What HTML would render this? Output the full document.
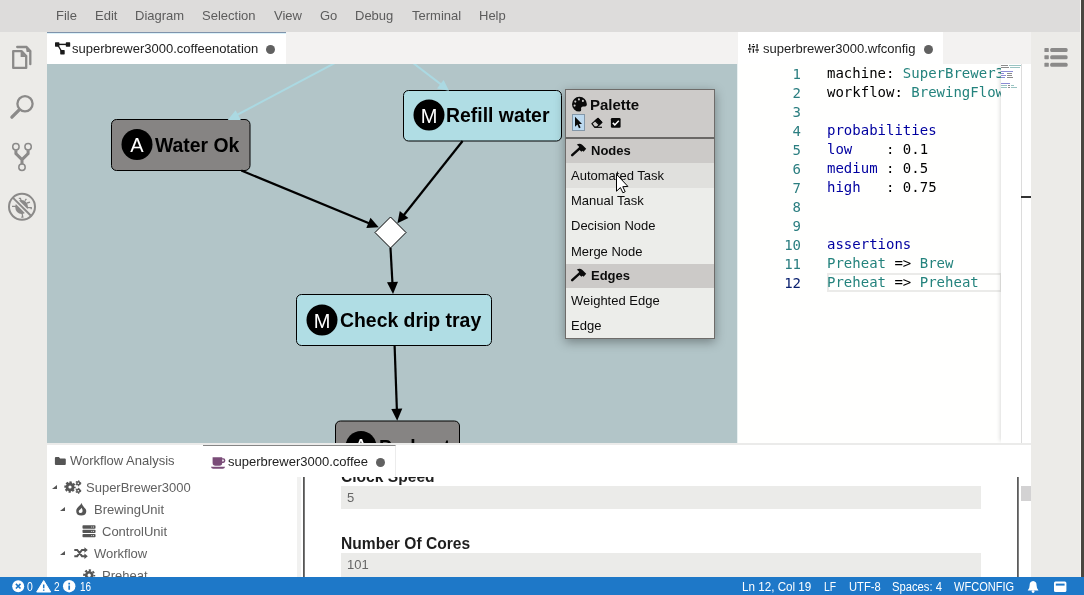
<!DOCTYPE html>
<html><head><meta charset="utf-8">
<style>
*{box-sizing:border-box;margin:0;padding:0}
body{will-change:transform}html,body{width:1084px;height:595px;overflow:hidden;background:#ecebe8;font-family:"Liberation Sans",sans-serif;}
#menubar{position:absolute;left:0;top:0;width:1084px;height:32px;background:#dddcdb;}
#menubar span{position:absolute;top:8px;font-size:13px;color:#5c5c5c;line-height:15px}
#lside{position:absolute;left:0;top:32px;width:47px;height:545px;background:#ecebe8}
#rside{position:absolute;left:1031px;top:32px;width:53px;height:545px;background:#ecebe8}
#tabbarL{position:absolute;left:47px;top:32px;width:691px;height:32px;background:#f3f2f1}
#tabbarR{position:absolute;left:738px;top:32px;width:293px;height:32px;background:#f3f2f1}
.tab{position:absolute;top:0;height:32px;background:#fff;font-size:13px;color:#222;line-height:32px;white-space:nowrap}
.dot{position:absolute;width:9px;height:9px;border-radius:50%;background:#616161}
#diagram{position:absolute;left:47px;top:64px;width:690px;height:379px;background:#b2c5c8;overflow:hidden}
#code{position:absolute;left:738px;top:64px;width:293px;height:379px;background:#fffffe;overflow:hidden}
#bottom{position:absolute;left:47px;top:443px;width:984px;height:134px;background:#fff;overflow:hidden}
#status{position:absolute;left:0;top:577px;width:1084px;height:18px;background:#1e78c8;color:#fff;font-size:12.5px;line-height:18px}
#status span{position:absolute;top:.5px;white-space:nowrap;transform-origin:0 0}

#palette{position:absolute;left:565px;top:89px;width:150px;height:250px;box-shadow:0 3px 10px rgba(0,0,0,.35);font-size:13px;color:#0c0c0c}
#phead{position:absolute;z-index:1;left:0;top:0;width:150px;height:50px;background:#cdcbc9;border:1px solid #6e6c6a;border-bottom:2px solid #6a6866}
#pbody{position:absolute;left:0;top:49px;width:150px;height:201px;background:#ecedea;border:1px solid #6e6c6a;border-top:none}
.prow{position:absolute;left:0;width:148px;height:25px;line-height:25px;padding-left:5px;white-space:nowrap}
.phd{background:#cccac8;font-weight:bold;font-size:13px;padding-left:25px}

#code{font-family:"DejaVu Sans Mono","Liberation Mono",monospace;font-size:14px;line-height:19px}
.ln{position:absolute;margin-top:1px;left:0;width:63px;text-align:right;color:#2b7e80;height:19px}
.cl{position:absolute;left:89px;height:19px;white-space:pre;color:#000}
.t{color:#24837d}.k{color:#0000a0}

#bottom{font-size:13px;color:#616161}
.trow{position:absolute;height:22px;line-height:22px;white-space:nowrap}
.tri{position:absolute;width:0;height:0;border-left:5px solid transparent;border-bottom:4.3px solid #555;margin-left:-.6px}
.flabel{position:absolute;left:294px;font-size:15.6px;font-weight:bold;color:#1e1e1e;line-height:17px;white-space:nowrap}
.finput{position:absolute;left:294px;width:640px;height:22px;background:#ebebe9;line-height:24px;padding-left:6px;color:#666;font-size:13px}
</style></head><body>
<div id="menubar">
<span style="left:56px">File</span><span style="left:95px">Edit</span><span style="left:135px">Diagram</span><span style="left:202px">Selection</span><span style="left:274px">View</span><span style="left:320px">Go</span><span style="left:355px">Debug</span><span style="left:412px">Terminal</span><span style="left:479px">Help</span>
</div>
<div id="lside"></div>
<div id="rside"></div>
<div id="tabbarL"><div class="tab" style="left:0;width:239px;border-top:1px solid #7f93ab;box-shadow:inset 0 1px 0 #dcf2fa;padding-left:25px;line-height:32px">superbrewer3000.coffeenotation<div class="dot" style="left:219px;top:12px"></div></div></div>
<div id="tabbarR"><div class="tab" style="left:0;width:205px;padding-left:25px;line-height:34px">superbrewer3000.wfconfig<div class="dot" style="left:186px;top:13px"></div></div></div>
<div id="diagram">
<svg width="691" height="379" viewBox="47 64 691 379" style="position:absolute;left:0;top:0" font-family="Liberation Sans, sans-serif">
<!-- nodes -->
<rect x="111.5" y="119.5" width="138.5" height="51" rx="5" ry="5" fill="#868483" stroke="#000" stroke-width="1"/>
<circle cx="137" cy="144.5" r="15.5" fill="#000"/>
<text x="137" y="152" font-size="20" fill="#fff" text-anchor="middle">A</text>
<text x="155" y="151.8" font-size="19.4" font-weight="bold" fill="#000">Water Ok</text>

<rect x="403.5" y="90.5" width="158" height="50.5" rx="5" ry="5" fill="#b0dde4" stroke="#000" stroke-width="1"/>
<circle cx="429" cy="115" r="15.5" fill="#000"/>
<text x="429" y="122.5" font-size="20" fill="#fff" text-anchor="middle">M</text>
<text x="446" y="121.8" font-size="19.4" font-weight="bold" fill="#000">Refill water</text>

<rect x="296.5" y="294.5" width="195" height="51" rx="5" ry="5" fill="#b0dde4" stroke="#000" stroke-width="1"/>
<circle cx="322" cy="320" r="15.5" fill="#000"/>
<text x="322" y="327.5" font-size="20" fill="#fff" text-anchor="middle">M</text>
<text x="340" y="326.8" font-size="19.4" font-weight="bold" fill="#000">Check drip tray</text>

<rect x="335.5" y="421" width="124" height="51" rx="5" ry="5" fill="#868483" stroke="#000" stroke-width="1"/>
<circle cx="361" cy="446.5" r="15.5" fill="#000"/>
<text x="361" y="453.4" font-size="20" fill="#fff" text-anchor="middle">A</text>
<text x="379" y="454.4" font-size="19.4" font-weight="bold" fill="#000">Preheat</text>

<polygon points="390.5,217 406,232.5 390.5,248 375,232.5" fill="#fff" stroke="#000" stroke-width="1"/>
<!-- light edges -->
<g stroke="#abd9e2" stroke-width="2" fill="#abd9e2">
<line x1="340.6" y1="60" x2="233" y2="117"/>
<polygon points="227.7,120 235.6,110.3 240.8,120" stroke="none"/>
<line x1="409.7" y1="60.4" x2="443.6" y2="86.4"/>
<polygon points="449,90.8 437,88.6 443.6,80" stroke="none"/>
</g>
<!-- dark edges -->
<g stroke="#000" stroke-width="2.2" fill="#000">
<line x1="241.3" y1="170.5" x2="372" y2="224.6"/>
<polygon points="378.7,227.3 366.3,228 370.5,217.8" stroke="none"/>
<line x1="462.6" y1="141" x2="401.5" y2="218"/>
<polygon points="397.4,223.3 399.8,211 408.4,217.9" stroke="none"/>
<line x1="390.5" y1="248" x2="392.6" y2="286"/>
<polygon points="393,294 387,282.3 398,281.7" stroke="none"/>
<line x1="394.6" y1="345.5" x2="397" y2="413"/>
<polygon points="397.2,420.7 391.3,409 402.3,408.6" stroke="none"/>
</g>
</svg>
</div>
<div id="palette">
<div id="phead"><span style="position:absolute;left:24px;top:6px;font-weight:bold;font-size:15px;line-height:17px">Palette</span>
<div style="position:absolute;left:6px;top:24px;width:13px;height:17px;background:#bcd9ef;border:1px solid #8497a8"></div>
</div>
<div id="pbody">
<div class="prow phd" style="top:0">Nodes</div>
<div class="prow" style="top:25px;background:#e0e0dd">Automated Task</div>
<div class="prow" style="top:50px">Manual Task</div>
<div class="prow" style="top:75px">Decision Node</div>
<div class="prow" style="top:100px;height:26px;line-height:27px">Merge Node</div>
<div class="prow phd" style="top:126px;height:24px;line-height:23px">Edges</div>
<div class="prow" style="top:150px">Weighted Edge</div>
<div class="prow" style="top:175px">Edge</div>
</div>
</div>
<div style="position:absolute;left:737px;top:64px;width:1px;height:379px;background:#e9f0f1"></div>
<div id="code">
<div style="position:absolute;left:89px;top:209px;width:175px;height:19px;border:2px solid #ebebe9"></div>
<div class="ln" style="top:0px">1</div><div class="cl" style="top:0px">machine: <span class="t">SuperBrewer3000</span></div>
<div class="ln" style="top:19px">2</div><div class="cl" style="top:19px">workflow: <span class="t">BrewingFlow</span></div>
<div class="ln" style="top:38px">3</div><div class="cl" style="top:38px"></div>
<div class="ln" style="top:57px">4</div><div class="cl" style="top:57px"><span class="k">probabilities</span></div>
<div class="ln" style="top:76px">5</div><div class="cl" style="top:76px"><span class="k">low</span>    : 0.1</div>
<div class="ln" style="top:95px">6</div><div class="cl" style="top:95px"><span class="k">medium</span> : 0.5</div>
<div class="ln" style="top:114px">7</div><div class="cl" style="top:114px"><span class="k">high</span>   : 0.75</div>
<div class="ln" style="top:133px">8</div><div class="cl" style="top:133px"></div>
<div class="ln" style="top:152px">9</div><div class="cl" style="top:152px"></div>
<div class="ln" style="top:171px">10</div><div class="cl" style="top:171px"><span class="k">assertions</span></div>
<div class="ln" style="top:190px">11</div><div class="cl" style="top:190px"><span class="t">Preheat</span> =&gt; <span class="t">Brew</span></div>
<div class="ln" style="top:209px;color:#0b216f">12</div><div class="cl" style="top:209px"><span class="t">Preheat</span> =&gt; <span class="t">Preheat</span></div>
<div style="position:absolute;left:263px;top:0;width:30px;height:379px;background:#fff;box-shadow:-3px 0 4px -2px rgba(0,0,0,.14)"></div>
<div style="position:absolute;left:263px;top:0;width:20px;height:40px;overflow:hidden"><i style="position:absolute;left:0.0px;top:0.7px;width:7.2px;height:1.6px;background:#000;opacity:.45"></i><i style="position:absolute;left:8.1px;top:0.7px;width:13.5px;height:1.6px;background:#1f7d78;opacity:.45"></i><i style="position:absolute;left:0.0px;top:2.7px;width:8.1px;height:1.6px;background:#000;opacity:.45"></i><i style="position:absolute;left:9.0px;top:2.7px;width:9.9px;height:1.6px;background:#1f7d78;opacity:.45"></i><i style="position:absolute;left:0.0px;top:6.7px;width:11.7px;height:1.6px;background:#0000a0;opacity:.45"></i><i style="position:absolute;left:0.0px;top:8.7px;width:2.7px;height:1.6px;background:#0000a0;opacity:.45"></i><i style="position:absolute;left:6.3px;top:8.7px;width:4.5px;height:1.6px;background:#000;opacity:.45"></i><i style="position:absolute;left:0.0px;top:10.7px;width:5.4px;height:1.6px;background:#0000a0;opacity:.45"></i><i style="position:absolute;left:6.3px;top:10.7px;width:4.5px;height:1.6px;background:#000;opacity:.45"></i><i style="position:absolute;left:0.0px;top:12.7px;width:3.6px;height:1.6px;background:#0000a0;opacity:.45"></i><i style="position:absolute;left:6.3px;top:12.7px;width:5.4px;height:1.6px;background:#000;opacity:.45"></i><i style="position:absolute;left:0.0px;top:18.7px;width:9.0px;height:1.6px;background:#0000a0;opacity:.45"></i><i style="position:absolute;left:0.0px;top:20.7px;width:6.3px;height:1.6px;background:#1f7d78;opacity:.45"></i><i style="position:absolute;left:7.2px;top:20.7px;width:1.8px;height:1.6px;background:#000;opacity:.45"></i><i style="position:absolute;left:9.9px;top:20.7px;width:3.6px;height:1.6px;background:#1f7d78;opacity:.45"></i><i style="position:absolute;left:0.0px;top:22.7px;width:6.3px;height:1.6px;background:#1f7d78;opacity:.45"></i><i style="position:absolute;left:7.2px;top:22.7px;width:1.8px;height:1.6px;background:#000;opacity:.45"></i><i style="position:absolute;left:9.9px;top:22.7px;width:6.3px;height:1.6px;background:#1f7d78;opacity:.45"></i></div>
<div style="position:absolute;left:283px;top:0;width:1px;height:379px;background:#dcdcdc"></div>
<div style="position:absolute;left:283px;top:132px;width:10px;height:2px;background:#333"></div>
</div>
<div id="bottom">
<div style="position:absolute;left:0;top:0;width:984px;height:2px;background:#ebebea"></div>
<div style="position:absolute;left:23px;top:7px;line-height:22px;font-size:13px;color:#5a5a5a">Workflow Analysis</div>
<div style="position:absolute;left:156px;top:2px;width:193px;height:32px;border-top:1px solid #858585;border-right:1px solid #ececec;color:#222;line-height:31px;padding-left:25px;font-size:13px">superbrewer3000.coffee<div class="dot" style="left:173px;top:12px"></div></div>
<div style="position:absolute;left:0;top:34px;width:984px;height:100px;overflow:hidden">
<div class="trow" style="left:39px;top:0px">SuperBrewer3000</div>
<div class="trow" style="left:47px;top:22px">BrewingUnit</div>
<div class="trow" style="left:55px;top:44px">ControlUnit</div>
<div class="trow" style="left:47px;top:66px">Workflow</div>
<div class="trow" style="left:55px;top:88px">Preheat</div>
<div class="tri" style="left:5.5px;top:7.5px"></div>
<div class="tri" style="left:13.5px;top:29.5px"></div>
<div class="tri" style="left:13.5px;top:73.5px"></div>
<div style="position:absolute;left:250px;top:0;width:4px;height:100px;background:#f1f1f0"></div>
<div style="position:absolute;left:256px;top:0;width:2px;height:100px;background:linear-gradient(to right,#444,#8a8a8a)"></div>
<div class="flabel" style="top:-9px">Clock Speed</div>
<div class="finput" style="top:9px;height:22.5px">5</div>
<div class="flabel" style="top:58px">Number Of Cores</div>
<div class="finput" style="top:76px;height:24px">101</div>
</div>
<div style="position:absolute;left:970px;top:34px;width:2px;height:100px;background:linear-gradient(to right,#4a4a4a,#909090)"></div>
<div style="position:absolute;left:974px;top:43px;width:10px;height:15px;background:#d3d2d3"></div>
</div>
<div style="position:absolute;left:1080px;top:0;width:1px;height:577px;background:#f4f3f1"></div><div style="position:absolute;left:1081px;top:0;width:3px;height:595px;background:#4a4741"></div>
<div id="status"><span style="left:27.2px;transform:scaleX(0.834)">0</span><span style="left:53.8px;transform:scaleX(0.805)">2</span><span style="left:79.7px;transform:scaleX(0.798)">16</span>
<span style="left:742.4px;transform:scaleX(0.932)">Ln 12, Col 19</span><span style="left:824px;transform:scaleX(0.829)">LF</span><span style="left:848.6px;transform:scaleX(0.895)">UTF-8</span><span style="left:892.4px;transform:scaleX(0.899)">Spaces: 4</span><span style="left:954.2px;transform:scaleX(0.883)">WFCONFIG</span></div>
<svg id="icons" width="1084" height="595" viewBox="0 0 1084 595" style="position:absolute;left:0;top:0;pointer-events:none;z-index:5" font-family="Liberation Sans, sans-serif">
<!-- left sidebar -->
<g stroke="#8b8a89" fill="none" stroke-linejoin="round">
<path d="M13.2,51.1 H21.5 L26.2,56 V67.9 H13.2 Z" stroke-width="2.3"/>
<path d="M20.6,51 V57 H26.2 Z" fill="#8b8a89" stroke="none"/>
<path d="M17.2,47 H26.6 L30.3,51 V64.2" stroke-width="2.3" stroke-linecap="round"/>
<path d="M25.6,46 L31.4,52 H26.6 Z" fill="#8b8a89" stroke="none"/>
<circle cx="25" cy="103.8" r="7.6" stroke-width="2.3"/>
<line x1="19.2" y1="109.8" x2="11.9" y2="117.2" stroke-width="3.3" stroke-linecap="round"/>
<path d="M15.9,150.2 V153.6 L22,159.6 V164 M28.1,150.2 V153.6 L22,159.6" stroke-width="3" stroke-linejoin="miter"/>
<circle cx="15.9" cy="146.8" r="3.2" stroke-width="1.5"/>
<circle cx="28.1" cy="146.8" r="3.2" stroke-width="1.5"/>
<circle cx="22" cy="167.3" r="3.2" stroke-width="1.5"/>
</g>
<g stroke="#8b8a89" stroke-width="1.3" fill="none">
<ellipse cx="21.6" cy="207" rx="6.4" ry="7" fill="#8b8a89" stroke="none"/>
<path d="M21.6,202 L20.4,198.4 H18.8 M25,200.6 L26.4,198.8 M27,203 L30,202.2 M12,206.3 H16 M27,207.6 H31.2 V209.2 M22,213 L22.8,217.2 H21.2"/>
</g>
<line x1="12.8" y1="197.6" x2="31.2" y2="216" stroke="#ecebe8" stroke-width="4.8"/>
<line x1="12.8" y1="197.6" x2="31.2" y2="216" stroke="#8b8a89" stroke-width="2"/>
<circle cx="22" cy="206.8" r="13" stroke="#8b8a89" stroke-width="2" fill="none"/>
<!-- right sidebar list -->
<g fill="#8b8a89">
<rect x="1044.4" y="48.1" width="4.4" height="4" rx=".6"/><rect x="1050.2" y="48.1" width="17.4" height="4" rx="1.5"/>
<rect x="1044.4" y="55.2" width="4.4" height="4" rx=".6"/><rect x="1050.2" y="55.2" width="17.4" height="4" rx="1.5"/>
<rect x="1044.4" y="62.8" width="4.4" height="4" rx=".6"/><rect x="1050.2" y="62.8" width="17.4" height="4" rx="1.5"/>
</g>
<!-- tab icons -->
<g fill="#1a1a1a" stroke="#1a1a1a">
<rect x="55" y="42.3" width="4.4" height="4.4" rx=".6" stroke="none"/><rect x="65.8" y="42.3" width="4.4" height="4.4" rx=".6" stroke="none"/><rect x="60.2" y="50.1" width="4.5" height="4.3" rx=".6" stroke="none"/>
<line x1="58" y1="44.4" x2="67" y2="44.4" stroke-width="1.4"/><line x1="57.8" y1="45" x2="61.6" y2="51.5" stroke-width="1.4"/>
</g>
<g stroke="#1a1a1a" stroke-width="1.3" fill="none">
<path d="M749.7,44 V47.4 M749.7,50.6 V52.8 M753.4,44 V45 M753.4,48.4 V52.8 M757.1,44 V48.4 M757.1,51.6 V52.8"/>
<path d="M748,49 H751.4 M751.7,46.7 H755.1 M755.4,50 H758.8" stroke-width="1.4"/>
</g>
<!-- coffee -->
<g fill="#7a4c78">
<path d="M212.6,457.3 H222.2 V463 Q222.2,465.8 219.4,465.8 H215.4 Q212.6,465.8 212.6,463 Z"/>
<path d="M222,458.2 H223.3 Q225.4,458.2 225.4,460.6 Q225.4,463 223.3,463 H222 V461.6 H223 Q223.9,461.6 223.9,460.6 Q223.9,459.6 223,459.6 H222 Z"/>
<path d="M210.9,466.8 H225.1 Q224.6,468.8 222.8,468.8 H213.2 Q211.4,468.8 210.9,466.8 Z"/>
</g>
<!-- palette header icons -->
<g fill="#0a0a0a">
<path d="M579.4,96.8 A7.4,7.4 0 1 0 579.4,111.6 Q581.6,111.6 581.2,109.6 Q580.4,106.6 583.2,106.4 L585.2,106.4 Q586.9,106.2 586.9,104.2 A7.5,7.4 0 0 0 579.4,96.8 Z"/>
</g>
<g fill="#cdcbc9"><circle cx="575.3" cy="101.6" r="1.05"/><circle cx="578.9" cy="99.4" r="1.05"/><circle cx="582.9" cy="100.9" r="1.05"/><circle cx="574.6" cy="105.6" r="1.05"/></g>
<path d="M575,116.8 V126.8 L577.4,124.6 L579,128.2 L580.6,127.5 L579,124 H582 Z" fill="#0a0a0a"/>
<g fill="#0a0a0a" stroke="#0a0a0a">
<path d="M591.9,123.6 L598,118.4 L601.8,122.4 L596.6,127.2 H594.6 Z" fill="none" stroke-width="1.2" stroke-linejoin="round"/>
<path d="M595.2,120.8 L598,118.4 L601.8,122.4 L599.2,124.8 Z" stroke-width="1.2" stroke-linejoin="round"/>
<line x1="594.6" y1="127.3" x2="602" y2="127.3" stroke-width="1.2"/>
</g>
<rect x="610.9" y="118" width="9.7" height="9.8" rx="1.2" fill="#0a0a0a"/>
<path d="M612.8,122.9 L614.8,124.9 L618.8,120.7" fill="none" stroke="#fff" stroke-width="1.5"/>
<!-- hammers -->
<g stroke="#0a0a0a" fill="#0a0a0a">
<line x1="572.2" y1="155.2" x2="580.5" y2="147.6" stroke-width="2.5" stroke-linecap="round"/>
<path d="M576.8,144.8 Q579.6,142.8 582.4,145 L586.2,148.8 L583.6,151.8 L582.4,150.8 L581.4,151.8 L578,148.6 L579.4,147.2 Q578.4,145.4 576.8,144.8 Z" stroke="none"/>
</g>
<g transform="translate(0,125)" stroke="#0a0a0a" fill="#0a0a0a">
<line x1="572.2" y1="155.2" x2="580.5" y2="147.6" stroke-width="2.5" stroke-linecap="round"/>
<path d="M576.8,144.8 Q579.6,142.8 582.4,145 L586.2,148.8 L583.6,151.8 L582.4,150.8 L581.4,151.8 L578,148.6 L579.4,147.2 Q578.4,145.4 576.8,144.8 Z" stroke="none"/>
</g>
<!-- mouse cursor -->
<path d="M616.5,174.3 V191.2 L620.4,187.6 L622.9,192.8 L625.2,191.7 L622.8,186.7 L627.9,186.4 Z" fill="#fff" stroke="#000" stroke-width="1" stroke-linejoin="miter"/>
<!-- tree icons -->
<g fill="#555">
<path d="M54.9,458.1 Q54.9,457.1 55.9,457.1 H58.9 L60.1,458.4 H64.8 Q65.8,458.4 65.8,459.4 V464 Q65.8,465 64.8,465 H55.9 Q54.9,465 54.9,464 Z"/>
</g>
<g id="cog" fill="none" stroke="#555">
<circle cx="70" cy="487" r="3" stroke-width="2.8"/>
<circle cx="70" cy="487" r="4.7" stroke-width="2" stroke-dasharray="2.2 1.49" stroke-dashoffset="1"/>
</g>
<g fill="none" stroke="#555">
<circle cx="78.3" cy="483.3" r="1.5" stroke-width="1.4"/><circle cx="78.3" cy="483.3" r="2.4" stroke-width="1.1" stroke-dasharray="1.2 1.31"/>
<circle cx="78.3" cy="490.8" r="1.5" stroke-width="1.4"/><circle cx="78.3" cy="490.8" r="2.4" stroke-width="1.1" stroke-dasharray="1.2 1.31"/>
</g>
<!-- fire -->
<path d="M81.6,503 Q82.2,505.6 84.2,507.4 Q86.3,509.4 86.3,511 Q86.3,515.6 81.2,515.6 Q76.2,515.6 76.2,511 Q76.2,508.6 78.6,506.4 Q80.8,504.6 81.6,503 Z M81.6,507.8 Q81,509 79.8,509.8 Q78.7,510.6 78.7,511.4 Q78.7,512.9 80.6,512.9 Q82.6,512.9 82.6,511 Q82.6,509.6 81.6,507.8 Z" fill="#555" fill-rule="evenodd"/>
<!-- server -->
<g fill="#555">
<rect x="82.5" y="525.3" width="13" height="3.4" rx=".8"/><rect x="82.5" y="529.8" width="13" height="3.2" rx=".8"/><rect x="82.5" y="534" width="13" height="3.2" rx=".8"/>
</g>
<g fill="#ddd"><rect x="91.2" y="526.5" width="1" height="1"/><rect x="93" y="526.5" width="1" height="1"/><rect x="91.2" y="530.9" width="1" height="1"/><rect x="93" y="530.9" width="1" height="1"/><rect x="91.2" y="535.1" width="1" height="1"/><rect x="93" y="535.1" width="1" height="1"/></g>
<!-- random -->
<g fill="none" stroke="#555" stroke-width="2">
<path d="M74.3,550 H77.2 L82,556.2 H85.2 M74.3,556.2 H77.2 L82,550 H85.2"/>
</g>
<path d="M84.4,547.2 L87.8,550 L84.4,552.8 Z M84.4,553.4 L87.8,556.2 L84.4,559 Z" fill="#555"/>
<!-- cog preheat (clipped) -->
<clipPath id="cp"><rect x="47" y="477" width="300" height="100"/></clipPath>
<g clip-path="url(#cp)" fill="none" stroke="#555">
<circle cx="89.2" cy="575.2" r="3" stroke-width="2.6"/>
<circle cx="89.2" cy="575.2" r="5.1" stroke-width="1.9" stroke-dasharray="2.2 1.8" stroke-dashoffset="1"/>
</g>
<!-- tree triangles drawn in html -->
<!-- status icons -->
<g fill="#fff">
<circle cx="18.2" cy="586.2" r="6"/>
<path d="M43.7,580.6 L50.7,592 H36.7 Z" stroke="#fff" stroke-width="1" stroke-linejoin="round"/>
<circle cx="69.2" cy="586.2" r="6.2"/>
<path d="M1033.1,581 Q1036.6,581.4 1036.6,585.4 Q1036.6,588.6 1038.5,590.6 H1027.7 Q1029.6,588.6 1029.6,585.4 Q1029.6,581.4 1033.1,581 Z"/>
<circle cx="1033.1" cy="591.6" r="1.4"/>
<rect x="1054" y="581.6" width="12.4" height="10.4" rx="1.5"/>
</g>
<g stroke="#1e78c8" stroke-width="1.6" fill="none">
<path d="M15.9,583.9 L20.5,588.5 M20.5,583.9 L15.9,588.5"/>
<path d="M43.7,584.6 V588.2 M43.7,589.4 V590.8" stroke-width="1.5"/>
<path d="M69.2,582.8 V584.4 M69.2,585.6 V589.8" stroke-width="1.7"/>
</g>
<rect x="1055.8" y="583.6" width="8.8" height="2" fill="#1e78c8"/>
</svg>
</body></html>
